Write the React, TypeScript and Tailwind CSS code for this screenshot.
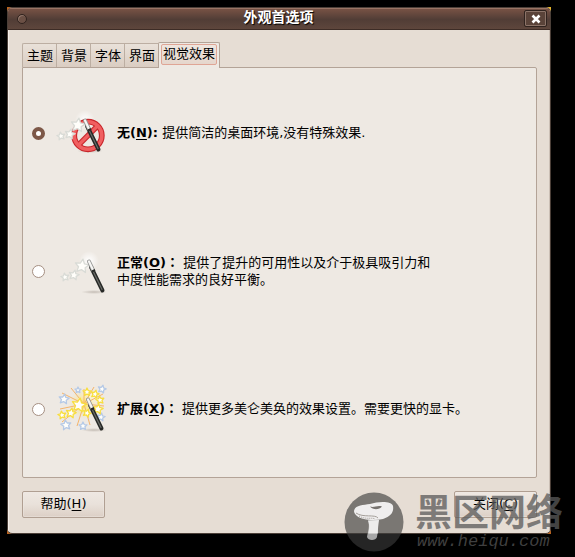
import React, { useState } from 'react';

const STAR = 'M0,-10 L3,-3.6 L10,-3 L4.8,1.8 L6.2,8.6 L0,5.2 L-6.2,8.6 L-4.8,1.8 L-10,-3 L-3,-3.6 Z';

const SILVER = '#d9dbd6';
const GOLD = '#f8de3e';
const SKY = '#b5c9e6';

type StarProps = { x: number; y: number; r: number; stroke: string; turn?: number };

function Star({ x, y, r, stroke, turn = 0 }: StarProps) {
  return (
    <path
      d={STAR}
      transform={`translate(${x} ${y}) rotate(${turn}) scale(${r / 10})`}
      fill="#fffefa"
      stroke={stroke}
      strokeWidth={13 / r}
      strokeLinejoin="round"
    />
  );
}

function Wand() {
  return (
    <g>
      <path d="M34 20 L45.5 43.5" stroke="#262826" strokeWidth="4" strokeLinecap="round" />
      <path d="M34.5 21 L45 42.5" stroke="#6a6c68" strokeWidth="1.2" strokeLinecap="round" />
      <path d="M32 14.5 L36 23" stroke="#969694" strokeWidth="4" strokeLinecap="round" />
      <path d="M32 14.5 L36 23" stroke="#f6f6f4" strokeWidth="2.2" strokeLinecap="round" />
      <path d="M35 24.5 L38 23" stroke="#262826" strokeWidth="2" />
    </g>
  );
}

function Glow() {
  return (
    <>
      <defs>
        <radialGradient id="glow">
          <stop offset="0" stopColor="#fff" />
          <stop offset="1" stopColor="#fff" stopOpacity="0" />
        </radialGradient>
        <radialGradient id="shade">
          <stop offset="0" stopColor="#776b60" stopOpacity=".35" />
          <stop offset="1" stopColor="#776b60" stopOpacity="0" />
        </radialGradient>
      </defs>
      <ellipse cx="37" cy="45" rx="13" ry="2" fill="url(#shade)" />
      <circle cx="32" cy="14" r="10" fill="url(#glow)" />
    </>
  );
}

function Trail() {
  return (
    <>
      <Star x={8} y={30} r={4} stroke={SILVER} turn={-10} />
      <Star x={17} y={28} r={5} stroke={SILVER} turn={12} />
      <Star x={25} y={19} r={7} stroke={SILVER} turn={8} />
    </>
  );
}

function NoneIcon() {
  return (
    <svg viewBox="0 0 48 48" className="size-12 shrink-0 overflow-visible" aria-hidden="true">
      <g transform="translate(-4 -3)">
        <Glow />
      </g>
      <circle cx="31" cy="26.5" r="13.8" fill="none" stroke="#c8262b" strokeWidth="5.8" />
      <path d="M21.5 36 L40.5 17" stroke="#c8262b" strokeWidth="5.4" />
      <circle cx="31" cy="26.5" r="13.8" fill="none" stroke="#f05f60" strokeWidth="3.6" />
      <path d="M21 36.5 L41 16.5" stroke="#f05f60" strokeWidth="3.2" />
      <g transform="translate(-4 -3)">
        <Trail />
        <Wand />
      </g>
    </svg>
  );
}

function NormalIcon() {
  return (
    <svg viewBox="0 0 48 48" className="size-12 shrink-0 overflow-visible" aria-hidden="true">
      <Glow />
      <Trail />
      <Wand />
    </svg>
  );
}

const RAYS = [
  [5, 8], [14, 3], [37, 2], [46, 9], [3, 24], [47, 21], [5, 37], [20, 41], [33, 40], [27, 4],
];

const SCATTER: StarProps[] = [
  { x: 7, y: 14, r: 5, stroke: SKY, turn: 8 },
  { x: 21, y: 5, r: 3, stroke: SKY },
  { x: 45, y: 4, r: 4, stroke: SKY, turn: 15 },
  { x: 9, y: 40, r: 5, stroke: SKY, turn: -8 },
  { x: 26, y: 41, r: 4, stroke: SKY },
  { x: 44, y: 32, r: 4, stroke: SKY, turn: 10 },
  { x: 30, y: 7, r: 4, stroke: GOLD },
  { x: 38, y: 9, r: 4, stroke: GOLD, turn: 15 },
  { x: 43, y: 15, r: 4, stroke: GOLD, turn: -8 },
  { x: 41, y: 24, r: 5, stroke: GOLD, turn: 10 },
  { x: 30, y: 28, r: 4, stroke: GOLD, turn: 20 },
  { x: 5, y: 30, r: 4, stroke: GOLD, turn: -10 },
  { x: 14, y: 28, r: 5, stroke: GOLD, turn: 12 },
  { x: 22, y: 20, r: 7, stroke: GOLD, turn: 10 },
];

function ExtraIcon() {
  return (
    <svg viewBox="0 0 48 48" className="size-12 shrink-0 overflow-visible" aria-hidden="true">
      <defs>
        <radialGradient id="burst">
          <stop offset="0" stopColor="#fbe45a" />
          <stop offset="1" stopColor="#fbe9a0" stopOpacity="0" />
        </radialGradient>
      </defs>
      <Glow />
      <circle cx="27" cy="19" r="15" fill="url(#burst)" />
      {RAYS.map(([x, y]) => (
        <path key={`${x}-${y}`} d={`M27 19 L${x} ${y}`} stroke="#f5b46a" strokeWidth="1" />
      ))}
      {SCATTER.map((star) => (
        <Star key={`${star.x}-${star.y}`} {...star} />
      ))}
      <g transform="translate(-1 0)">
        <Wand />
      </g>
    </svg>
  );
}

const TABS = ['主题', '背景', '字体', '界面'];

const EFFECTS = [
  { id: 'none', name: '无', mark: 'N', colon: ':', text: ['提供简洁的桌面环境,没有特殊效果.'], Icon: NoneIcon },
  { id: 'normal', name: '正常', mark: 'O', colon: '：', text: ['提供了提升的可用性以及介于极具吸引力和', '中度性能需求的良好平衡。'], Icon: NormalIcon },
  { id: 'extra', name: '扩展', mark: 'X', colon: '：', text: ['提供更多美仑美奂的效果设置。需要更快的显卡。'], Icon: ExtraIcon },
];

function DialogButton({ label, mark }: { label: string; mark: string }) {
  return (
    <button
      type="button"
      className="h-[27px] w-[83px] rounded-xs border border-[#b09f92] bg-linear-to-b from-[#efe8e2] from-0% via-[#e9e1da] via-50% to-[#dccfc5] pb-0.5 shadow-[inset_0_0_0_1px_#f1ebe566]"
    >
      {label}(<u className="underline-offset-2">{mark}</u>)
    </button>
  );
}

function Watermark() {
  return (
    <div className="pointer-events-none absolute right-3 bottom-[6px] flex items-end gap-[11px]">
      <svg viewBox="0 0 60 60" className="size-[60px]" aria-hidden="true">
        <circle cx="30" cy="30" r="29.5" fill="#3b3b3b" fillOpacity=".63" />
        <path
          d="M10 19 C11 13 19 13 26 12 C35 9 48 9 49 14 C50 20 47 24 39 27 C30 29 18 28 13 24 C11 22 10 21 10 19 Z"
          fill="#fff"
          fillOpacity=".88"
        />
        <path d="M24 28.5 L35 28 C34 33 34 39 33 45 C32 49 24 49 23 45 C24 40 26 34 24 28.5 Z" fill="#fff" fillOpacity=".6" />
        <path d="M24 28.5 L35 28 C34 32 34 36 34 41.5 L24.5 41.5 C25 37 26 34 24 28.5 Z" fill="#fff" fillOpacity=".65" />
        <path d="M26 14.5 C30 16 33 13 38 14.5 C35 18 29 18 26 14.5 Z" fill="#77736f" />
        <path d="M12 21 C19 26 31 22 34 26" fill="none" stroke="#a39e99" strokeWidth="1" />
        <path d="M15 24 C22 28 28 25 31 27" fill="none" stroke="#a39e99" strokeWidth="1" strokeDasharray="1 1" />
      </svg>
      <div>
        <p className="text-[37px] leading-9 font-bold text-[#5a5a5a]/75">黑区网络</p>
        <p className="pl-0.5 font-['Liberation_Mono',monospace] text-[17px] leading-5 text-[#555555]/75 italic">
          www.heiqu.com
        </p>
      </div>
    </div>
  );
}

export default function App() {
  const [effect, setEffect] = useState('none');
  return (
    <main className="relative min-h-screen bg-black pt-[7px] pr-6 pb-6 pl-[7px] font-['DejaVu_Sans','Noto_Sans_CJK_SC',sans-serif] text-[13px] leading-[17px] text-black">
      <div className="bg-linear-to-tr from-[#b8631f] from-60% to-[#e8b62c]">
        <section className="overflow-hidden rounded-[5px] border border-[#4b3f38] bg-[#e6ddd4]">
          <header className="flex h-[22px] items-center border-b border-[#3d2c26] bg-linear-to-b from-[#7b5446] via-[#513d36] via-55% to-[#5e463c] pr-[3px] pl-[9px] shadow-[inset_0_1px_0_#9a7464]">
            <span className="size-2.5 rounded-full border border-[#2f221d] bg-[#6b5045] shadow-[inset_1px_1px_0_#93786c]" />
            <h1 className="flex-1 pl-1.5 pb-0.5 text-center text-sm leading-[17px] font-bold text-white [text-shadow:1px_1px_1px_#000]">
              外观首选项
            </h1>
            <button
              type="button"
              aria-label="关闭窗口"
              className="flex h-[17px] w-[23px] items-center justify-center rounded-xs border border-[#30231e] bg-[#5a4339] shadow-[inset_0_0_0_1px_#8b7368]"
            >
              <svg viewBox="0 0 10 10" className="size-2.5" aria-hidden="true">
                <path d="M1.5 1.5 L8.5 8.5 M8.5 1.5 L1.5 8.5" stroke="#fff" strokeWidth="2.6" />
              </svg>
            </button>
          </header>

          <div className="border-x border-[#f3eee9] border-r-[#cbbfb5] pt-3 pr-3 pb-[15px] pl-[13px]">
            <div role="tablist" className="flex items-end">
              {TABS.map((tab) => (
                <button
                  key={tab}
                  type="button"
                  role="tab"
                  aria-selected="false"
                  className="h-6 border-t border-l border-[#bcaea2] bg-linear-to-b from-[#e9e1d9] to-[#dacdc2] pr-[3px] pl-1 first:rounded-tl-xs"
                >
                  {tab}
                </button>
              ))}
              <button
                type="button"
                role="tab"
                aria-selected="true"
                className="relative -mb-px h-[26px] rounded-t-xs border border-b-0 border-[#b3a397] bg-[#eee9e3] px-0.5 pb-0.5"
              >
                <span className="block rounded-xs border border-[#dfa595] bg-linear-to-b from-[#efe6df] to-[#e5d6cc] px-px pb-0.5">
                  视觉效果
                </span>
              </button>
            </div>

            <div
              role="tabpanel"
              className="flex flex-col gap-[90px] rounded-xs rounded-tl-none border border-[#b3a397] bg-[#eee9e3] pt-[41px] pr-4 pb-[44px] pl-[9px]"
            >
              {EFFECTS.map(({ id, name, mark, colon, text, Icon }) => (
                <label key={id} className="flex items-center gap-3">
                  <input
                    type="radio"
                    name="effect"
                    checked={effect === id}
                    onChange={() => setEffect(id)}
                    className="size-[13px] shrink-0 appearance-none rounded-full border border-[#a58f82] bg-white checked:border-4 checked:border-[#7d5848]"
                  />
                  <Icon />
                  <span className="pb-px">
                    <b className="font-['DejaVu_Sans','Noto_Sans_CJK_TC',sans-serif]">
                      {name}(<u className="underline-offset-2">{mark}</u>){colon}
                    </b>{' '}
                    {text.map((line) => (
                      <React.Fragment key={line}>
                        {line}
                        <br />
                      </React.Fragment>
                    ))}
                  </span>
                </label>
              ))}
            </div>

            <footer className="mt-[13px] flex justify-between">
              <DialogButton label="帮助" mark="H" />
              <DialogButton label="关闭" mark="C" />
            </footer>
          </div>
        </section>
      </div>
      <Watermark />
    </main>
  );
}
